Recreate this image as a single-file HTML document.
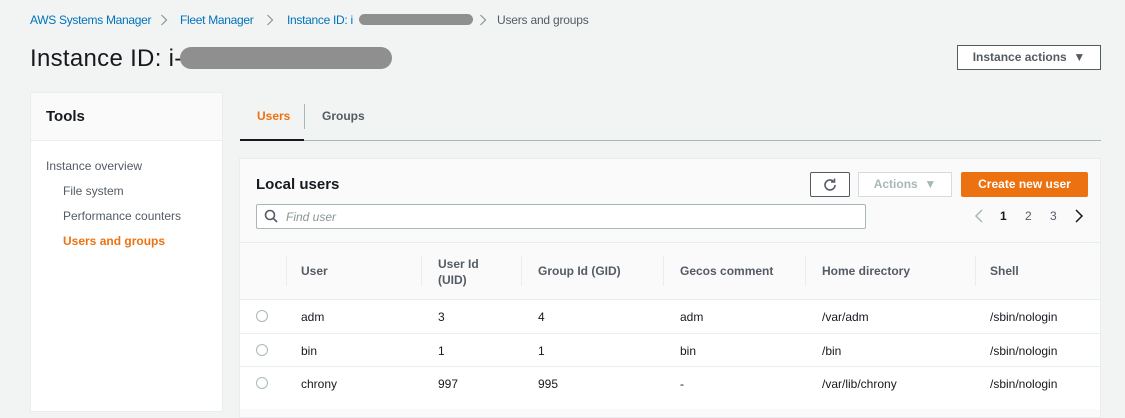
<!DOCTYPE html>
<html><head><meta charset="utf-8"><style>
*{box-sizing:border-box;margin:0;padding:0}
body{width:1125px;height:400px;overflow:hidden;background:#f2f3f3;font-family:"Liberation Sans",Arial,sans-serif;color:#16191f;position:relative;font-size:12px}
.a{position:absolute;white-space:nowrap}
.link{color:#0073bb;letter-spacing:-0.3px}
.b{font-weight:bold}
.blur{background:#8f8f8f;border-radius:8px;position:absolute}
.hd{color:#545b64;font-weight:bold}
.vl{position:absolute;width:1px;background:#eaeded}
.hl{position:absolute;height:1px;background:#eaeded}
.radio{position:absolute;width:12px;height:12px;border:1px solid #aab7b8;border-radius:50%;background:#fff}
</style></head><body>
<div class="a link" style="left:30px;top:13px">AWS Systems Manager</div>
<svg class="a" style="left:160px;top:14px" width="8" height="12"><path d="M1.5 1l5 5-5 5" fill="none" stroke="#879596" stroke-width="1.2"/></svg>
<div class="a link" style="left:180px;top:13px">Fleet Manager</div>
<svg class="a" style="left:266px;top:14px" width="8" height="12"><path d="M1.5 1l5 5-5 5" fill="none" stroke="#879596" stroke-width="1.2"/></svg>
<div class="a link" style="left:287px;top:13px">Instance ID: i</div>
<div class="blur" style="left:359px;top:14px;width:114px;height:11px"></div>
<svg class="a" style="left:479px;top:14px" width="8" height="12"><path d="M1.5 1l5 5-5 5" fill="none" stroke="#879596" stroke-width="1.2"/></svg>
<div class="a" style="left:497px;top:13px;color:#545b64;letter-spacing:-0.2px">Users and groups</div>
<div class="a" style="left:30px;top:45px;font-size:24px;letter-spacing:0.3px">Instance ID: i-</div>
<div class="blur" style="left:180px;top:47px;width:212px;height:22px;border-radius:11px"></div>
<div class="a b" style="left:957px;top:45px;width:144px;height:25px;border:1px solid #545b64;background:#fff;color:#545b64;text-align:center;line-height:23px">Instance actions &nbsp;▼</div>

<div class="a" style="left:30px;top:92px;width:193px;height:320px;background:#fff;border:1px solid #eaeded"></div>
<div class="a" style="left:31px;top:93px;width:191px;height:48px;background:#fafafa;border-bottom:1px solid #eaeded"></div>
<div class="a b" style="left:46px;top:108px;font-size:15px">Tools</div>
<div class="a" style="left:46px;top:159px;color:#545b64">Instance overview</div>
<div class="a" style="left:63px;top:184px;color:#545b64">File system</div>
<div class="a" style="left:63px;top:209px;color:#545b64">Performance counters</div>
<div class="a b" style="left:63px;top:234px;color:#ec7211">Users and groups</div>

<div class="a b" style="left:257px;top:109px;color:#ec7211">Users</div>
<div class="a" style="left:304px;top:104px;width:1px;height:25px;background:#aab7b8"></div>
<div class="a b" style="left:322px;top:109px;color:#545b64">Groups</div>
<div class="a" style="left:240px;top:140px;width:861px;height:1px;background:#aab7b8"></div>
<div class="a" style="left:240px;top:139px;width:64px;height:2px;background:#16191f"></div>

<div class="a" style="left:239px;top:158px;width:862px;height:260px;background:#fafafa;border:1px solid #eaeded"></div>
<div class="a b" style="left:256px;top:176px;font-size:15px">Local users</div>
<div class="a" style="left:810px;top:172px;width:40px;height:25px;border:1px solid #545b64;background:#fff;border-radius:2px"></div>
<svg class="a" style="left:822px;top:177px" width="16" height="16" viewBox="0 0 16 16"><path d="M13 8a5 5 0 1 1-1.6-3.7" fill="none" stroke="#545b64" stroke-width="1.6"/><path d="M12.5 1.5v3.5H9" fill="none" stroke="#545b64" stroke-width="1.6"/></svg>
<div class="a b" style="left:858px;top:172px;width:94px;height:25px;border:1px solid #d5dbdb;background:#fff;color:#aab7b8;text-align:center;line-height:23px">Actions &nbsp;▼</div>
<div class="a b" style="left:961px;top:172px;width:127px;height:25px;background:#ec7211;color:#fff;text-align:center;line-height:25px;border-radius:2px">Create new user</div>
<div class="a" style="left:256px;top:204px;width:610px;height:25px;border:1px solid #aab7b8;background:#fff;border-radius:2px"></div>
<svg class="a" style="left:264px;top:209px" width="14" height="14" viewBox="0 0 14 14"><circle cx="6" cy="6" r="4.5" fill="none" stroke="#545b64" stroke-width="1.6"/><path d="M9.3 9.3L13 13" stroke="#545b64" stroke-width="1.6"/></svg>
<div class="a" style="left:286px;top:210px;color:#879596;font-style:italic">Find user</div>
<svg class="a" style="left:974px;top:209px" width="10" height="14"><path d="M8 1L2 7l6 6" fill="none" stroke="#aab7b8" stroke-width="1.5"/></svg>
<div class="a b" style="left:1000px;top:209px">1</div>
<div class="a" style="left:1025px;top:209px;color:#545b64">2</div>
<div class="a" style="left:1050px;top:209px;color:#545b64">3</div>
<svg class="a" style="left:1074px;top:209px" width="10" height="14"><path d="M2 1l6 6-6 6" fill="none" stroke="#16191f" stroke-width="1.5"/></svg>

<div class="hl" style="left:240px;top:242px;width:860px"></div>
<div class="vl" style="left:286px;top:256px;height:30px"></div>
<div class="vl" style="left:421px;top:256px;height:30px"></div>
<div class="vl" style="left:521px;top:256px;height:30px"></div>
<div class="vl" style="left:663px;top:256px;height:30px"></div>
<div class="vl" style="left:805px;top:256px;height:30px"></div>
<div class="vl" style="left:975px;top:256px;height:30px"></div>
<div class="a hd" style="left:301px;top:264px">User</div>
<div class="a hd" style="left:438px;top:256px;line-height:16px">User Id<br>(UID)</div>
<div class="a hd" style="left:538px;top:264px">Group Id (GID)</div>
<div class="a hd" style="left:680px;top:264px">Gecos comment</div>
<div class="a hd" style="left:822px;top:264px">Home directory</div>
<div class="a hd" style="left:990px;top:264px">Shell</div>
<div class="a" style="left:240px;top:299px;width:860px;height:110px;background:#fff;border-top:1px solid #eaeded"></div>
<div class="hl" style="left:240px;top:333px;width:860px"></div>
<div class="hl" style="left:240px;top:366px;width:860px"></div>
<div class="radio" style="left:256px;top:310px"></div>
<div class="radio" style="left:256px;top:344px"></div>
<div class="radio" style="left:256px;top:377px"></div>
<div class="a" style="left:301px;top:310px">adm</div><div class="a" style="left:438px;top:310px">3</div><div class="a" style="left:538px;top:310px">4</div><div class="a" style="left:680px;top:310px">adm</div><div class="a" style="left:822px;top:310px">/var/adm</div><div class="a" style="left:990px;top:310px">/sbin/nologin</div>
<div class="a" style="left:301px;top:344px">bin</div><div class="a" style="left:438px;top:344px">1</div><div class="a" style="left:538px;top:344px">1</div><div class="a" style="left:680px;top:344px">bin</div><div class="a" style="left:822px;top:344px">/bin</div><div class="a" style="left:990px;top:344px">/sbin/nologin</div>
<div class="a" style="left:301px;top:377px">chrony</div><div class="a" style="left:438px;top:377px">997</div><div class="a" style="left:538px;top:377px">995</div><div class="a" style="left:680px;top:377px">-</div><div class="a" style="left:822px;top:377px">/var/lib/chrony</div><div class="a" style="left:990px;top:377px">/sbin/nologin</div>
</body></html>
